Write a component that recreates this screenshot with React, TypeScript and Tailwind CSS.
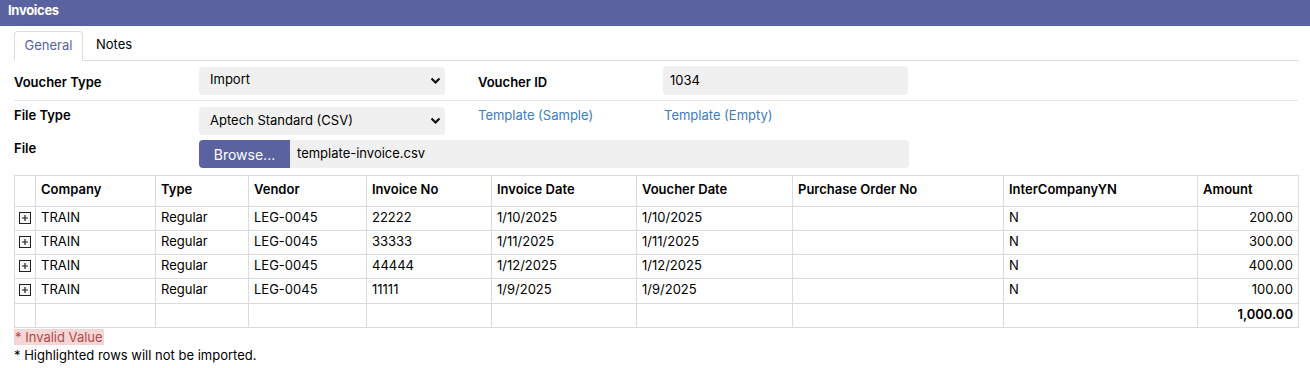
import React from "react";

const cols = [21, 120, 93, 118, 125, 145, 156, 211, 194, 101];
const heads = ["", "Company", "Type", "Vendor", "Invoice No", "Invoice Date", "Voucher Date", "Purchase Order No", "InterCompanyYN", "Amount"];
const rows = [
  ["22222", "1/10/2025", "200.00"],
  ["33333", "1/11/2025", "300.00"],
  ["44444", "1/12/2025", "400.00"],
  ["11111", "1/9/2025", "100.00"],
];

function Chevron() {
  return (
    <svg width="11" height="8" viewBox="0 0 11 8" className="absolute right-[4px] top-1/2 -translate-y-1/2">
      <path d="M1.5 1.5 L5.5 5.5 L9.5 1.5" stroke="#111" strokeWidth="2.2" fill="none" />
    </svg>
  );
}

function PlusBox() {
  return (
    <svg width="12" height="12" viewBox="0 0 12 12">
      <rect x="0.5" y="0.5" width="11" height="11" fill="#f4f4f4" stroke="#222" />
      <path d="M3 6 H9 M6 3 V9" stroke="#222" strokeWidth="1.2" />
    </svg>
  );
}

export default function App() {
  return (
    <div className="w-[1310px] h-[368px] bg-white text-[13px] text-black overflow-hidden" style={{ fontFamily: "Inter, 'Noto Sans', sans-serif" }}>
      <div className="h-[26px] bg-[#5a62a0] pl-[8px] pt-[1px] text-white font-bold text-[13px] tracking-[-0.3px]">Invoices</div>
      <div className="pl-[14px] pr-[12px]">
        <div className="flex h-[35px] pt-[5px] border-b border-[#dcdcdc]">
          <div className="w-[69px] -mb-px border border-[#dcdcdc] border-b-white rounded-t-[4px] bg-white flex items-start justify-center pt-[4px] text-[#5a62a0]">General</div>
          <div className="pl-[13px] pt-[4px]">Notes</div>
        </div>
        <div className="flex h-[40px] items-center border-b border-[#e6e6e6]">
          <div className="w-[185px] font-semibold pt-[4px]">Voucher Type</div>
          <div className="relative w-[246px] h-[28px] bg-[#f0f0f0] rounded-[4px] pl-[11px] pt-[3px]">Import<Chevron /></div>
          <div className="w-[218px] pl-[33px] font-semibold pt-[4px]">Voucher ID</div>
          <div className="w-[245px] h-[29px] bg-[#f0f0f0] rounded-[4px] pl-[7px] flex items-center pt-[1px]">1034</div>
        </div>
        <div className="flex h-[39px] pt-[6px]">
          <div className="w-[185px] font-semibold -mt-[1px]">File Type</div>
          <div className="relative w-[246px] h-[28px] bg-[#f0f0f0] rounded-[4px] pl-[11px] pt-[4px]">Aptech Standard (CSV)<Chevron /></div>
          <div className="w-[219px] pl-[33px] text-[#3b7dc4] -mt-[1px]">Template (Sample)</div>
          <div className="text-[#3b7dc4] -mt-[1px]">Template (Empty)</div>
        </div>
        <div className="flex h-[35px]">
          <div className="w-[185px] font-semibold -mt-[1px]">File</div>
          <div className="flex h-[28px]">
            <div className="w-[91px] bg-[#5a62a0] text-white rounded-l-[4px] flex items-center justify-center text-[14px]">Browse...</div>
            <div className="w-[619px] bg-[#f0f0f0] rounded-r-[4px] pl-[7px] flex items-center">template-invoice.csv</div>
          </div>
        </div>
        <table className="border-collapse table-fixed w-[1284px]">
          <colgroup>
            {cols.map((w, i) => <col key={i} style={{ width: w }} />)}
          </colgroup>
          <thead>
            <tr className="h-[31px]">
              {heads.map((h, i) => (
                <th key={i} className="border border-[#dcdcdc] font-semibold text-left align-top pt-[4px] px-[5px]">{h}</th>
              ))}
            </tr>
          </thead>
          <tbody>
            {rows.map((r, ri) => (
              <tr key={ri} className={ri === 3 ? "h-[25px]" : "h-[24px]"}>
                <td className="border border-[#dcdcdc] pl-[4px] align-top pt-[5px]"><PlusBox /></td>
                <td className="border border-[#dcdcdc] px-[5px] align-top pt-[1px]">TRAIN</td>
                <td className="border border-[#dcdcdc] px-[5px] align-top pt-[1px]">Regular</td>
                <td className="border border-[#dcdcdc] px-[5px] align-top pt-[1px]">LEG-0045</td>
                <td className="border border-[#dcdcdc] px-[5px] align-top pt-[1px]">{r[0]}</td>
                <td className="border border-[#dcdcdc] px-[5px] align-top pt-[1px]">{r[1]}</td>
                <td className="border border-[#dcdcdc] px-[5px] align-top pt-[1px]">{r[1]}</td>
                <td className="border border-[#dcdcdc] px-[5px] align-top pt-[1px]"></td>
                <td className="border border-[#dcdcdc] px-[5px] align-top pt-[1px]">N</td>
                <td className="border border-[#dcdcdc] px-[5px] align-top pt-[1px] text-right">{r[2]}</td>
              </tr>
            ))}
            <tr className="h-[24px]">
              {cols.map((_, i) => (
                <td key={i} className={`border border-[#dcdcdc] px-[5px] align-top pt-[1px] ${i === 9 ? "text-right font-semibold" : ""}`}>{i === 9 ? "1,000.00" : ""}</td>
              ))}
            </tr>
          </tbody>
        </table>
        <div className="mt-[1px] w-fit bg-[#f5d6d6] text-[#b04a4a] px-[1px] leading-[16px]">* Invalid Value</div>
        <div className="mt-[2px] leading-[16px]">* Highlighted rows will not be imported.</div>
      </div>
    </div>
  );
}
